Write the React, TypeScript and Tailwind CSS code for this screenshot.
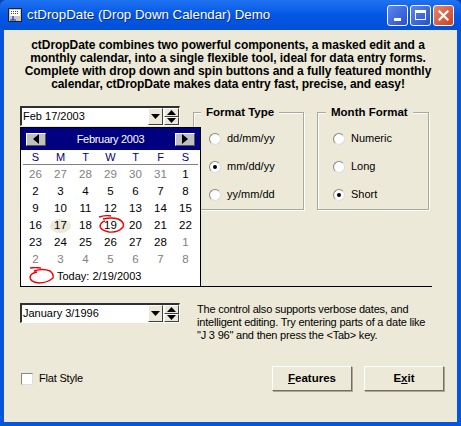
const cells = [
  ["26", "27", "28", "29", "30", "31", "1"],
  ["2", "3", "4", "5", "6", "7", "8"],
  ["9", "10", "11", "12", "13", "14", "15"],
  ["16", "17", "18", "19", "20", "21", "22"],
  ["23", "24", "25", "26", "27", "28", "1"],
  ["2", "3", "4", "5", "6", "7", "8"],
]

function isMuted(row: number, col: number) {
  return row === 0 ? col < 6 : row === 5 || (row === 4 && col === 6)
}

function Tri({ dir, className = "" }: { dir: "up" | "down" | "left" | "right"; className?: string }) {
  const pts = { up: "0,5 9,5 4.5,0", down: "0,0 9,0 4.5,5", left: "6,0 6,10 0,5", right: "0,0 0,10 6,5" }[dir]
  const box = dir === "up" || dir === "down" ? "0 0 9 5" : "0 0 6 10"
  const size = dir === "up" || dir === "down" ? "w-[9px] h-[5px]" : "w-[6px] h-[10px]"
  return (
    <svg viewBox={box} className={`${size} ${className}`}>
      <polygon points={pts} fill="#000" />
    </svg>
  )
}

const raised = "bg-[#ECE9D8] border border-t-white border-l-white border-r-[#404040] border-b-[#404040]"

function DateCombo({ value }: { value: string }) {
  return (
    <div className="flex shrink-0 h-[20px] w-[160px] bg-white border-t-2 border-l-2 border-t-[#303030] border-l-[#303030] border-r border-b border-r-white border-b-white">
      <div className="flex-1 pl-[1px] text-[11px] leading-[16px] text-black whitespace-nowrap">{value}</div>
      <div className={`w-[15px] h-[17px] flex items-center justify-center ${raised}`}>
        <Tri dir="down" />
      </div>
      <div className="w-[15px] h-[17px] flex flex-col ml-px">
        <div className={`flex-1 flex items-center justify-center ${raised}`}>
          <Tri dir="up" />
        </div>
        <div className={`flex-1 flex items-center justify-center ${raised}`}>
          <Tri dir="down" />
        </div>
      </div>
    </div>
  )
}

function Calendar() {
  return (
    <div className="absolute z-10 left-0 top-[21px] w-[181px] h-[160px] bg-white border border-black">
      <div className="flex items-center justify-between h-[22px] px-[5px] bg-[#000080] text-white text-[11px] tracking-[-0.3px]">
        <div className="w-[20px] h-[13px] flex items-center justify-center bg-[#C0C0C0] border border-t-white border-l-white border-r-[#555] border-b-[#555]">
          <Tri dir="left" />
        </div>
        <span>February 2003</span>
        <div className="w-[20px] h-[13px] flex items-center justify-center bg-[#C0C0C0] border border-t-white border-l-white border-r-[#555] border-b-[#555]">
          <Tri dir="right" />
        </div>
      </div>
      <div className="mx-[2px] grid grid-cols-7 h-[15px] border-b border-[#808080] text-[11px] leading-[14px] text-center text-[#000080]">
        {["S", "M", "T", "W", "T", "F", "S"].map((d, i) => (
          <span key={i}>{d}</span>
        ))}
      </div>
      <div className="relative mx-[2px] pt-[1px] grid grid-cols-7 auto-rows-[17px] text-[11.5px] leading-[17px] text-center">
        {cells.map((row, r) =>
          row.map((d, c) => (
            <span
              key={`${r}-${c}`}
              className={`${isMuted(r, c) ? "text-[#808080]" : "text-black"} ${r === 3 && c === 1 ? "bg-[#ECE9D8] rounded-[50%] mx-[2px] h-[14px] mt-[2px] leading-[13px]" : ""}`}
            >
              {d}
            </span>
          )),
        )}
        <svg viewBox="0 0 28 20" className="absolute left-[75px] top-[50px] w-[28px] h-[20px]" fill="none" stroke="#F00000" strokeWidth="1.4">
          <path d="M1 2 Q8 0 13 1 M5 4 Q14 2 20 4 Q27 7 25 12 Q20 18 11 17 Q2 15 2 11 Q3 7 7 6" />
        </svg>
      </div>
      <div className="relative h-[18px] pl-[36px] text-[11px] leading-[16px] text-black whitespace-nowrap">
        Today: 2/19/2003
        <svg viewBox="0 0 26 18" className="absolute left-[8px] top-[-1px] w-[26px] h-[18px]" fill="none" stroke="#F00000" strokeWidth="1.4">
          <path d="M1 1 Q6 0 12 1 M5 4 Q14 1 21 4 Q25 7 24 11 Q18 16 10 16 Q1 15 1 10 Q2 6 8 5" />
        </svg>
      </div>
    </div>
  )
}

function Radio({ label, checked = false }: { label: string; checked?: boolean }) {
  return (
    <div className="flex items-center gap-[6px] h-[13px] text-[11px] text-black whitespace-nowrap">
      <span className="w-[12px] h-[12px] rounded-full bg-white flex items-center justify-center border border-t-[#8a887c] border-l-[#8a887c] border-r-[#ddd] border-b-[#ddd]">
        {checked && <span className="w-[4px] h-[4px] rounded-full bg-black" />}
      </span>
      {label}
    </div>
  )
}

function GroupBox({ title, width, titleLeft, options }: { title: string; width: string; titleLeft: string; options: { label: string; checked?: boolean }[] }) {
  return (
    <div className={`relative h-[98px] ${width} border border-[#ACA899] shadow-[1px_1px_0_#fff,inset_1px_1px_0_#fff] flex flex-col gap-[15px] pt-[19px] pl-[15px]`}>
      <div className={`absolute top-[-8px] ${titleLeft} bg-[#ECE9D8] px-[5px] text-[11.5px] leading-[15px] font-bold text-black whitespace-nowrap`}>{title}</div>
      {options.map(o => (
        <Radio key={o.label} label={o.label} checked={o.checked} />
      ))}
    </div>
  )
}

function CloseIcon() {
  return (
    <svg viewBox="0 0 11 11" className="w-[11px] h-[11px]" stroke="#fff" strokeWidth="2.2" strokeLinecap="square">
      <path d="M1.5 1.5 L9.5 9.5 M9.5 1.5 L1.5 9.5" />
    </svg>
  )
}

export default function App() {
  const winBtn = "w-[21px] h-[21px] rounded-[3px] border border-white flex items-center justify-center"
  const actionBtn = "w-[80px] h-[25px] bg-[#ECE9D8] border border-t-white border-l-white border-r-[#716F64] border-b-[#716F64] text-[11.5px] font-bold shadow-[1px_1px_0_#ACA899]"
  return (
    <div className="w-[461px] h-[426px] bg-[#0A3FA8]">
      <div
        className="w-full h-full flex flex-col bg-[#0855DD] rounded-t-[6px] overflow-hidden text-black"
        style={{ fontFamily: '"Liberation Sans", Arial, sans-serif' }}
      >
        {/* Title bar */}
        <div className="h-[30px] flex items-center pl-[8px] pr-[7px] bg-gradient-to-b from-[#1F72F0] via-[#0357E6] to-[#0350D8]">
          <svg viewBox="0 0 14 14" className="w-[14px] h-[14px] mr-[5px]">
            <rect x="0" y="0" width="14" height="14" fill="#C8C8C8" />
            <rect x="0.5" y="0.5" width="13" height="13" fill="none" stroke="#202020" />
            <rect x="2" y="2" width="10" height="6" fill="#fff" />
            <path d="M3 3.5h1M5 3.5h1M7 3.5h1M9 3.5h1M3 5.5h1M5 5.5h1M7 5.5h1M9 5.5h1" stroke="#444" />
            <path d="M2 12h6M5 8v4" stroke="#1030c0" strokeWidth="1.2" />
          </svg>
          <span className="flex-1 text-[13.3px] text-white [text-shadow:1px_1px_0_#0a3080]">ctDropDate (Drop Down Calendar) Demo</span>
          <div className="flex gap-[2px]">
            <div className={`${winBtn} bg-gradient-to-br from-[#5C86EC] to-[#2A50CC] items-end pb-[4px]`}>
              <span className="w-[7px] h-[3px] bg-white" />
            </div>
            <div className={`${winBtn} bg-gradient-to-br from-[#5C86EC] to-[#2A50CC]`}>
              <span className="w-[11px] h-[10px] border border-t-[3px] border-white" />
            </div>
            <div className={`${winBtn} bg-gradient-to-br from-[#E8856A] to-[#C8401C]`}>
              <CloseIcon />
            </div>
          </div>
        </div>

        {/* Client area */}
        <div className="flex-1 mx-[4px] mb-[4px] bg-[#ECE9D8] px-[16px] flex flex-col">
          <p className="pt-[9px] pr-[5px] text-center text-[12px] tracking-[-0.05px] leading-[13px] font-bold whitespace-nowrap">
            ctDropDate combines two powerful components, a masked edit and a
            <br />
            monthly calendar, into a single flexible tool, ideal for data entry forms.
            <br />
            Complete with drop down and spin buttons and a fully featured monthly
            <br />
            calendar, ctDropDate makes data entry fast, precise, and easy!
          </p>

          <div className="mt-[15px] h-[181px] w-[412px] flex border-b border-black">
            <div className="relative w-[160px] shrink-0">
              <DateCombo value="Feb 17/2003" />
              <Calendar />
            </div>
            <div className="flex items-start gap-[13px] ml-[13px] pt-[6px]">
              <GroupBox
                title="Format Type"
                width="w-[111px]"
                titleLeft="left-[7px]"
                options={[{ label: "dd/mm/yy" }, { label: "mm/dd/yy", checked: true }, { label: "yy/mm/dd" }]}
              />
              <GroupBox
                title="Month Format"
                width="w-[112px]"
                titleLeft="left-[8px]"
                options={[{ label: "Numeric" }, { label: "Long" }, { label: "Short", checked: true }]}
              />
            </div>
          </div>

          <div className="mt-[16px] flex items-start">
            <DateCombo value="January 3/1996" />
            <p className="ml-[17px] text-[11px] tracking-[-0.2px] leading-[13px] whitespace-nowrap">
              The control also supports verbose dates, and
              <br />
              intelligent editing. Try entering parts of a date like
              <br />
              "J 3 96" and then press the &lt;Tab&gt; key.
            </p>
          </div>

          <div className="mt-[24px] flex items-center">
            <span className="w-[12px] h-[12px] bg-white border border-t-[#8a887c] border-l-[#8a887c] border-r-[#ddd] border-b-[#ddd] ml-px" />
            <span className="ml-[6px] text-[11px] tracking-[-0.2px]">Flat Style</span>
            <div className="ml-auto flex gap-[12px] mr-[-3px]">
              <button className={actionBtn}>
                <span className="underline">F</span>eatures
              </button>
              <button className={actionBtn}>
                E<span className="underline">x</span>it
              </button>
            </div>
          </div>
        </div>
      </div>
    </div>
  )
}
